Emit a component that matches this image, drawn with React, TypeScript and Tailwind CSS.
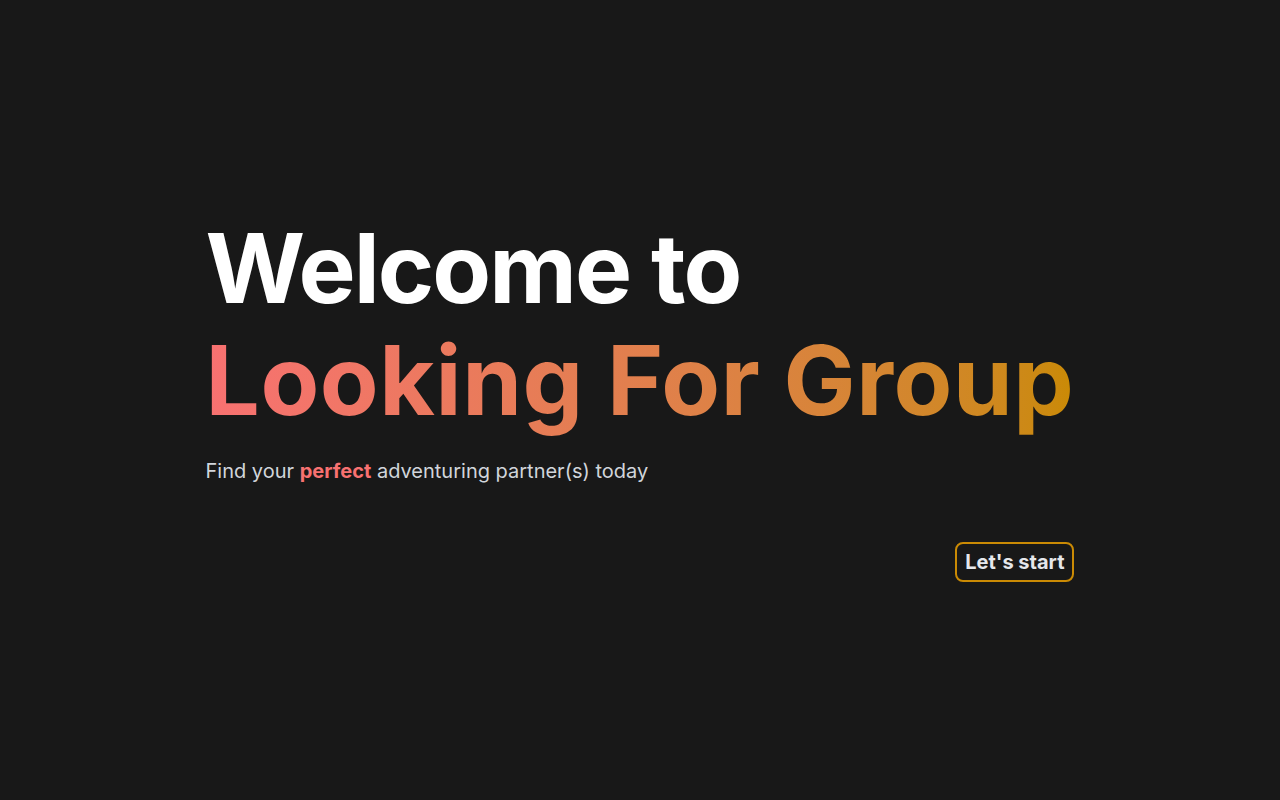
export default function App() {
  return (
    <div className="min-h-screen w-full bg-[#181818] flex items-center justify-center pb-[6px] font-['Inter',sans-serif]">
      <div className="flex flex-col">
        <h1 className="text-[96px] font-bold leading-[112px] text-white">
          <span className="block tracking-[-0.02em]">Welcome to</span>
          <span className="block tracking-[0.006em] bg-gradient-to-r from-[#f87171] to-[#ca8a04] bg-clip-text text-transparent pb-2">
            Looking For Group
          </span>
        </h1>
        <p className="mt-[13px] text-xl text-[#d1d5db]">
          Find your <span className="font-bold text-[#f87171]">perfect</span> adventuring partner(s) today
        </p>
        <div className="mt-[57px] flex justify-end">
          <button className="rounded-lg border-2 border-[#ca8a04] px-2 py-1 text-xl font-bold text-[#e5e7eb]">
            Let's start
          </button>
        </div>
      </div>
    </div>
  );
}
